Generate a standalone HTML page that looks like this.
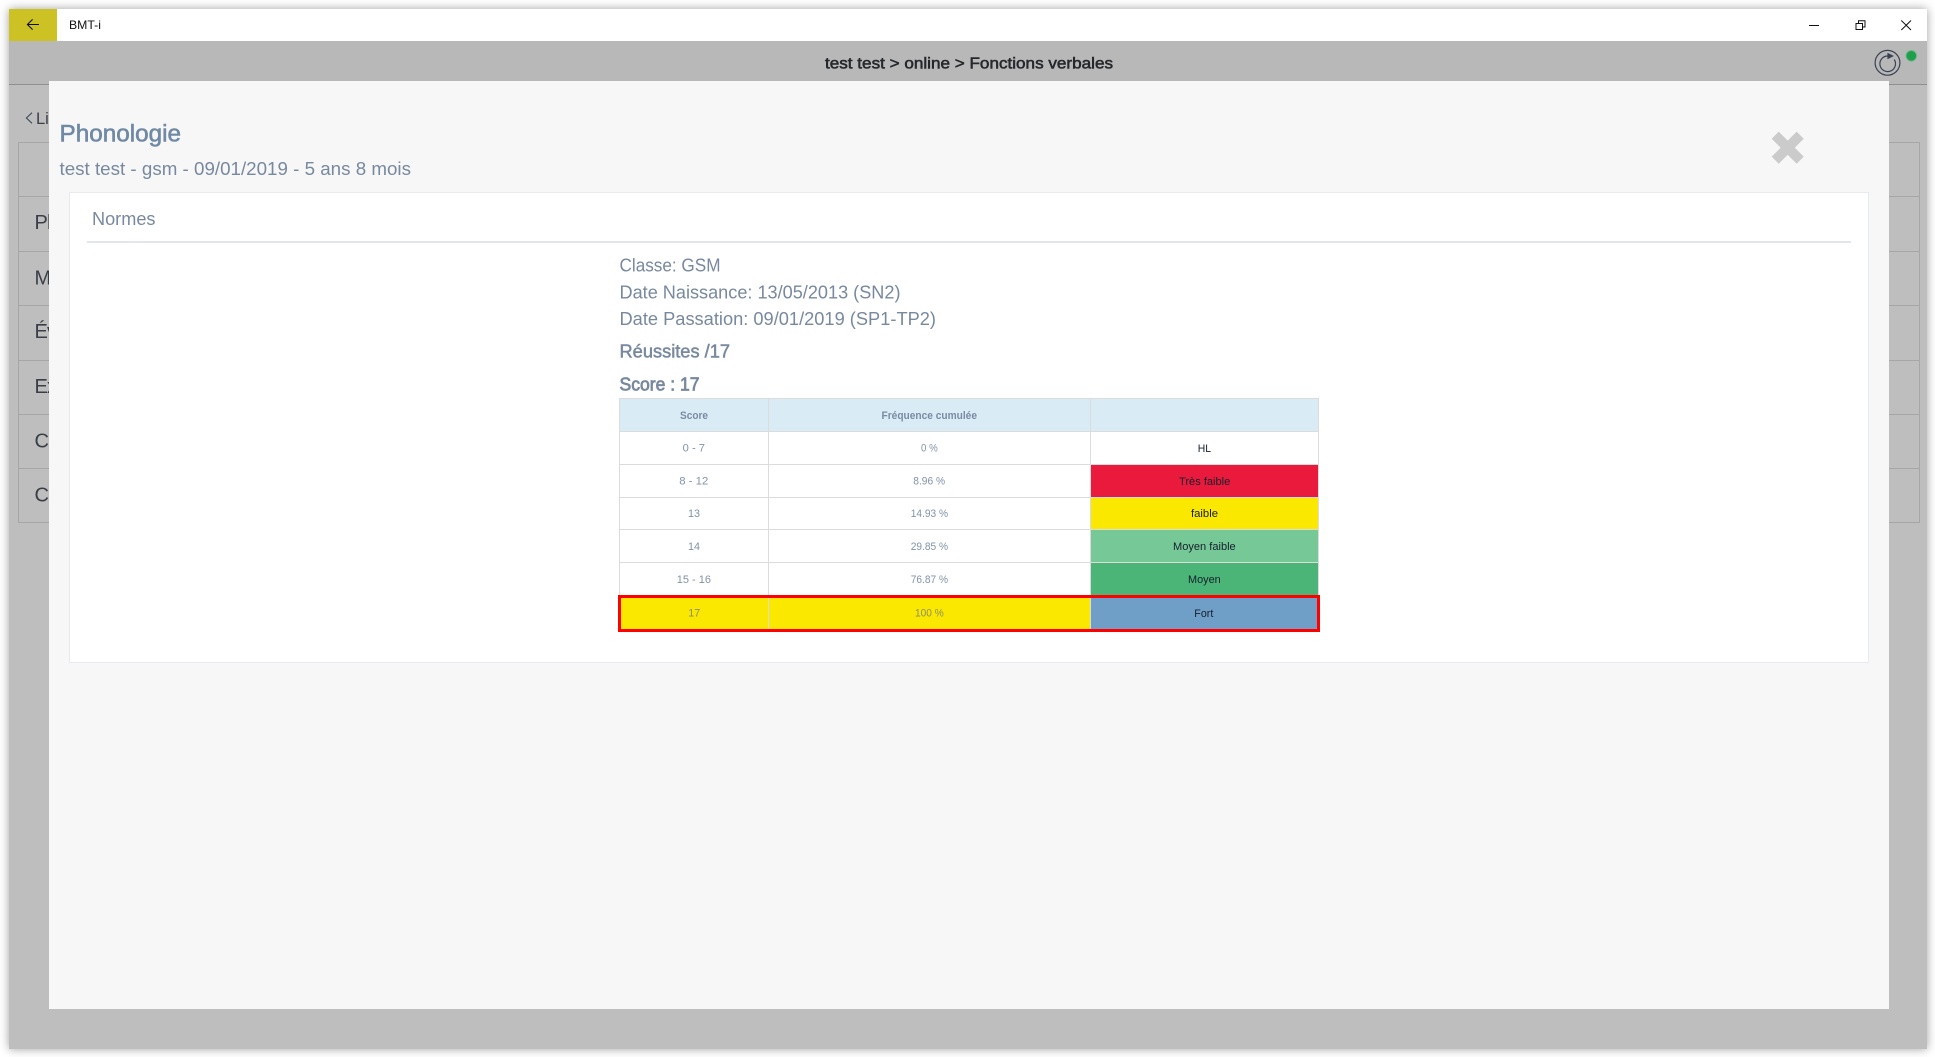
<!DOCTYPE html>
<html lang="fr">
<head>
<meta charset="utf-8">
<title>BMT-i</title>
<style>
html,body{margin:0;padding:0;width:1935px;height:1057px;overflow:hidden;background:#fff}
#shadow{position:absolute;left:9px;top:9px;width:1918px;height:1040px;box-shadow:0 0 9px rgba(0,0,0,.38)}
svg{position:absolute;left:0;top:0;display:block}
text{font-family:"Liberation Sans",sans-serif}
.m{fill:#78899f;font-size:18px}
.b{fill:#78899f;font-size:18px;stroke:#78899f;stroke-width:.5}
.th{fill:#7a8ba3;font-size:11px;font-weight:bold}
.td{fill:#8292a8;font-size:11px}
.tx{fill:#15202e;font-size:11px}
.s{fill:#3a3f47;font-size:20px;letter-spacing:-.8px}
.g{stroke:#a6a6a6;stroke-width:1;fill:none}
</style>
</head>
<body>
<div id="shadow"></div>
<svg width="1935" height="1057" viewBox="0 0 1935 1057" xmlns="http://www.w3.org/2000/svg">
  <!-- window -->
  <rect x="9" y="9" width="1918" height="1040" fill="#bebebe"/>
  <rect x="9" y="9" width="1918" height="32" fill="#fff"/>
  <rect x="9" y="9" width="48" height="32" fill="#cdc224"/>
  <path d="M39 24.5H27.6M32.6 19.4L27.4 24.5L32.6 29.6" fill="none" stroke="#111" stroke-width="1.1"/>
  <text x="69" y="29" font-size="12" fill="#111" textLength="32" lengthAdjust="spacingAndGlyphs">BMT-i</text>
  <path d="M1809 25.5H1819" stroke="#111" stroke-width="1"/>
  <path d="M1856 23.5H1862.5V29.5H1856ZM1858.5 23.5V20.8H1865V27H1862.5" fill="none" stroke="#111" stroke-width="1"/>
  <path d="M1901.3 20.5L1911 30M1911 20.5L1901.3 30" stroke="#111" stroke-width="1"/>

  <!-- header -->
  <rect x="9" y="41" width="1918" height="43" fill="#b8b8b8"/>
  <rect x="9" y="84" width="1918" height="1" fill="#8f8f8f"/>
  <text x="825" y="68.5" font-size="16" fill="#26282c" stroke="#26282c" stroke-width=".55" textLength="288" lengthAdjust="spacingAndGlyphs">test test &gt; online &gt; Fonctions verbales</text>
  <circle cx="1887.5" cy="62.8" r="12.4" fill="none" stroke="#3a4252" stroke-width="1.2"/>
  <path d="M1888.2 56A7.8 7.8 0 1 0 1894.2 59.5" fill="none" stroke="#3a4252" stroke-width="1.2"/>
  <path d="M1887.4 52.7L1894 56L1887.4 59.3Z" fill="#3a4252"/>
  <circle cx="1911.3" cy="55.8" r="5.3" fill="#1f9f4b" stroke="#6fb98a" stroke-width="1"/>

  <!-- background page -->
  <path d="M32 112.7L26.4 118L32 123.3" fill="none" stroke="#3a4a5a" stroke-width="1.1"/>
  <text x="36" y="124" font-size="16.5" fill="#3a3f47">Li</text>
  <rect x="18.5" y="142.5" width="1901" height="380" class="g"/>
  <path class="g" d="M18 196.5H1920M18 251.5H1920M18 305.5H1920M18 360.5H1920M18 414.5H1920M18 468.5H1920"/>
  <text class="s" x="34.5" y="229">Ph</text>
  <text class="s" x="34.5" y="284.5">Mo</text>
  <text class="s" x="34.5" y="338">Év</text>
  <text class="s" x="34.5" y="393">Ex</text>
  <text class="s" x="34.5" y="447.5">Co</text>
  <text class="s" x="34.5" y="501.5">Co</text>

  <!-- modal -->
  <rect x="49" y="81" width="1840" height="928" fill="#f7f7f7"/>
  <path d="M1775.2 135.2L1800.2 160.2M1800.2 135.2L1775.2 160.2" stroke="#cbcbcb" stroke-width="10"/>
  <text x="59.5" y="141.7" font-size="24.5" fill="#7089a5" stroke="#7089a5" stroke-width=".6" textLength="121.5" lengthAdjust="spacingAndGlyphs">Phonologie</text>
  <text class="m" x="59.5" y="175" textLength="351.5" lengthAdjust="spacingAndGlyphs">test test - gsm - 09/01/2019 - 5 ans 8 mois</text>

  <!-- card -->
  <rect x="69.5" y="192.5" width="1799" height="470" fill="#fff" stroke="#e8eaef" stroke-width="1"/>
  <text class="m" x="92" y="225" textLength="63.5" lengthAdjust="spacingAndGlyphs">Normes</text>
  <rect x="87" y="241" width="1764" height="2" fill="#e3e7ed"/>

  <text class="m" x="619.5" y="271.7" textLength="101" lengthAdjust="spacingAndGlyphs">Classe: GSM</text>
  <text class="m" x="619.5" y="298.5" textLength="281" lengthAdjust="spacingAndGlyphs">Date Naissance: 13/05/2013 (SN2)</text>
  <text class="m" x="619.5" y="325" textLength="316.5" lengthAdjust="spacingAndGlyphs">Date Passation: 09/01/2019 (SP1-TP2)</text>
  <text class="b" x="619.5" y="357.7" textLength="110.5" lengthAdjust="spacingAndGlyphs">Réussites /17</text>
  <text class="b" x="619.5" y="390.7" textLength="80" lengthAdjust="spacingAndGlyphs" style="stroke-width:.75">Score : 17</text>

  <!-- table fills -->
  <rect x="619" y="398" width="699" height="33" fill="#d9ecf5"/>
  <rect x="1090" y="464" width="228" height="33" fill="#e91a3b"/>
  <rect x="1090" y="497" width="228" height="32" fill="#fbe800"/>
  <rect x="1090" y="529" width="228" height="33" fill="#77c897"/>
  <rect x="1090" y="562" width="228" height="33" fill="#4bb577"/>
  <rect x="619" y="595" width="471" height="37" fill="#fbe800"/>
  <rect x="1090" y="595" width="228" height="37" fill="#6f9fc7"/>
  <!-- table grid -->
  <path d="M619 398.5H1318.5M619 431.5H1318.5M619 464.5H1318.5M619 497.5H1318.5M619 529.5H1318.5M619 562.5H1318.5M619.5 398V595M768.5 398V632M1090.5 398V632M1318.5 398V595" stroke="#dcdcdc" stroke-width="1" fill="none"/>
  <!-- highlight -->
  <path d="M619.5 596.5H1318.5V630.5H619.5Z" fill="none" stroke="#ff0000" stroke-width="3"/>
  <path d="M768.5 598V629M1090.5 598V629" stroke="#dcdcdc" stroke-width="1"/>

  <!-- table text -->
  <text class="th" x="680" y="419" textLength="28" lengthAdjust="spacingAndGlyphs">Score</text>
  <text class="th" x="881.5" y="419" textLength="95.5" lengthAdjust="spacingAndGlyphs">Fréquence cumulée</text>

  <text class="td" x="682.7" y="451.7" textLength="22.3" lengthAdjust="spacingAndGlyphs">0 - 7</text>
  <text class="td" x="679.3" y="484.7" textLength="29" lengthAdjust="spacingAndGlyphs">8 - 12</text>
  <text class="td" x="688" y="517" textLength="12" lengthAdjust="spacingAndGlyphs">13</text>
  <text class="td" x="688" y="550" textLength="12" lengthAdjust="spacingAndGlyphs">14</text>
  <text class="td" x="676.7" y="583" textLength="34.3" lengthAdjust="spacingAndGlyphs">15 - 16</text>
  <text class="td" x="688.3" y="616.7" textLength="12" lengthAdjust="spacingAndGlyphs" style="fill:#8b8f66">17</text>

  <text class="td" x="921" y="451.7" textLength="16.7" lengthAdjust="spacingAndGlyphs">0 %</text>
  <text class="td" x="913.3" y="484.7" textLength="31.7" lengthAdjust="spacingAndGlyphs">8.96 %</text>
  <text class="td" x="910.7" y="517" textLength="37.3" lengthAdjust="spacingAndGlyphs">14.93 %</text>
  <text class="td" x="910.7" y="550" textLength="37.3" lengthAdjust="spacingAndGlyphs">29.85 %</text>
  <text class="td" x="910.7" y="583" textLength="37.3" lengthAdjust="spacingAndGlyphs">76.87 %</text>
  <text class="td" x="915" y="616.7" textLength="28.7" lengthAdjust="spacingAndGlyphs" style="fill:#8b8f66">100 %</text>

  <text class="tx" x="1197.7" y="452" textLength="13.3" lengthAdjust="spacingAndGlyphs">HL</text>
  <text class="tx" x="1179" y="485" textLength="51.3" lengthAdjust="spacingAndGlyphs">Très faible</text>
  <text class="tx" x="1191" y="517" textLength="27" lengthAdjust="spacingAndGlyphs">faible</text>
  <text class="tx" x="1173" y="550" textLength="62.7" lengthAdjust="spacingAndGlyphs">Moyen faible</text>
  <text class="tx" x="1188" y="583" textLength="32.7" lengthAdjust="spacingAndGlyphs">Moyen</text>
  <text class="tx" x="1194.3" y="617" textLength="19" lengthAdjust="spacingAndGlyphs">Fort</text>
</svg>
</body>
</html>
